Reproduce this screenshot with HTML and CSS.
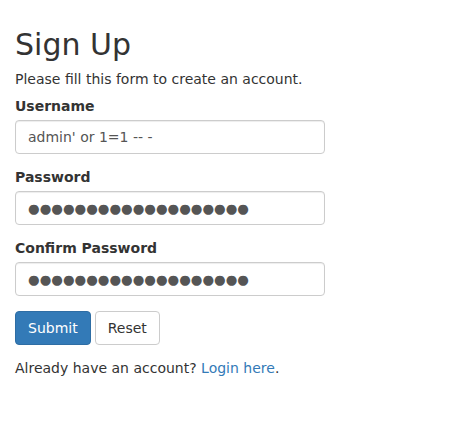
FILE: index.html
```html
<!DOCTYPE html>
<html>
<head>
<meta charset="utf-8">
<title>Sign Up</title>
<link rel="stylesheet" href="styles.css">
</head>
<body>
<div class="wrapper">
  <h2 class="title">Sign Up</h2>
  <p class="intro">Please fill this form to create an account.</p>
  <form class="form">
    <div class="form-group">
      <label class="label">Username</label>
      <input type="text" class="form-control" value="admin' or 1=1 -- -">
    </div>
    <div class="form-group">
      <label class="label">Password</label>
      <input type="text" class="form-control masked" value="●●●●●●●●●●●●●●●●●●●">
    </div>
    <div class="form-group">
      <label class="label">Confirm Password</label>
      <input type="text" class="form-control masked" value="●●●●●●●●●●●●●●●●●●●">
    </div>
    <div class="form-group actions">
      <input type="submit" class="btn btn-primary" value="Submit">
      <input type="reset" class="btn btn-default" value="Reset">
    </div>
    <p class="footer">Already have an account? <a class="link" href="#">Login here</a>.</p>
  </form>
</div>
</body>
</html>
```
FILE: styles.css
```css
html, body {
  margin: 0;
  padding: 0;
  background: #fff;
}
body {
  font-family: "DejaVu Sans", sans-serif;
  font-size: 14px;
  line-height: 17px;
  color: #333;
}
.wrapper {
  width: 310px;
  padding: 8px 15px;
}
.title {
  font-size: 30px;
  font-weight: 500;
  line-height: 33px;
  margin: 20px 0 10px;
}
.intro {
  margin: 0 0 10px;
}
.form {
  margin: 0;
}
.form-group {
  margin-bottom: 15px;
}
.label {
  display: block;
  font-weight: bold;
  margin-bottom: 5px;
}
.form-control {
  display: block;
  box-sizing: border-box;
  width: 100%;
  height: 34px;
  margin: 0;
  padding: 6px 12px;
  font-family: "DejaVu Sans", sans-serif;
  font-size: 14px;
  color: #555;
  background: #fff;
  border: 1px solid #ccc;
  border-radius: 4px;
  box-shadow: inset 0 1px 1px rgba(0,0,0,.075);
  outline: none;
}
.masked {
  font-size: 13.333px;
}
.actions {
  display: flex;
  gap: 4px;
}
.btn {
  box-sizing: border-box;
  height: 34px;
  margin: 0;
  padding: 6px 12px;
  font-family: "DejaVu Sans", sans-serif;
  font-size: 14px;
  line-height: 20px;
  border: 1px solid transparent;
  border-radius: 4px;
  cursor: pointer;
}
.btn-primary {
  color: #fff;
  background: #337ab7;
  border-color: #2e6da4;
}
.btn-default {
  color: #333;
  background: #fff;
  border-color: #ccc;
}
.footer {
  margin: 0;
}
.link {
  color: #337ab7;
  text-decoration: none;
}
```
